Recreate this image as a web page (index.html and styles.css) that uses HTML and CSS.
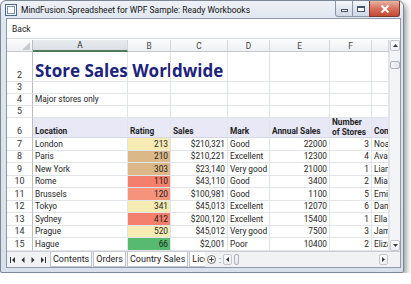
FILE: index.html
```html
<!DOCTYPE html>
<html lang="en">
<head>
    <meta charset="UTF-8">
    <title>MindFusion.Spreadsheet for WPF Sample: Ready Workbooks</title>
    <link rel="stylesheet" href="styles.css">
</head>
<body>
    <div class="window">
        <div class="titlebar">
            <svg class="app-icon" width="12" height="12" viewBox="0 0 12 12">
                <rect x="0.5" y="0.5" width="11" height="11" fill="#f4f7fb" stroke="#4d6a8c"/>
                <rect x="2.5" y="2.5" width="7" height="7" fill="#ffffff" stroke="#7d94ae"/>
            </svg>
            <span class="title">MindFusion.Spreadsheet for WPF Sample: Ready Workbooks</span>
            <div class="caption-buttons">
                <span class="cap-btn cap-min"><i></i></span>
                <span class="cap-btn cap-max"><i></i></span>
                <span class="cap-btn cap-close">
                    <svg width="10" height="8" viewBox="0 0 10 8">
                        <path d="M1.5 0.5 L8.5 7.5 M8.5 0.5 L1.5 7.5" stroke="#ffffff" stroke-width="2"/>
                    </svg>
                </span>
            </div>
        </div>

        <div class="client">
            <div class="toolbar"><span>Back</span></div>

            <div class="sheet">
                <div class="grid">
                    <!-- column headers -->
                    <div class="corner"><span class="corner-tri"></span></div>
                    <div class="ch sel">A</div>
                    <div class="ch">B</div>
                    <div class="ch">C</div>
                    <div class="ch">D</div>
                    <div class="ch">E</div>
                    <div class="ch">F</div>
                    <div class="ch"></div>

                    <!-- row 2 -->
                    <div class="rh">2</div>
                    <div class="c title-cell">Store Sales Worldwide</div>
                    <div class="c"></div><div class="c"></div><div class="c"></div><div class="c"></div><div class="c"></div><div class="c"></div>

                    <!-- row 3 -->
                    <div class="rh">3</div>
                    <div class="c"></div><div class="c"></div><div class="c"></div><div class="c"></div><div class="c"></div><div class="c"></div><div class="c"></div>

                    <!-- row 4 -->
                    <div class="rh">4</div>
                    <div class="c over">Major stores only</div>
                    <div class="c"></div><div class="c"></div><div class="c"></div><div class="c"></div><div class="c"></div><div class="c"></div>

                    <!-- row 5 -->
                    <div class="rh">5</div>
                    <div class="c"></div><div class="c"></div><div class="c"></div><div class="c"></div><div class="c"></div><div class="c"></div><div class="c"></div>

                    <!-- row 6: table header -->
                    <div class="rh">6</div>
                    <div class="c hd">Location</div>
                    <div class="c hd">Rating</div>
                    <div class="c hd">Sales</div>
                    <div class="c hd">Mark</div>
                    <div class="c hd">Annual Sales</div>
                    <div class="c hd wrap">Number of Stores</div>
                    <div class="c hd">Contact</div>

                    <div class="rh">7</div>
                    <div class="c">London</div>
                    <div class="c r heat-yellow">213</div>
                    <div class="c r">$210,321</div>
                    <div class="c">Good</div>
                    <div class="c r">22000</div>
                    <div class="c r">3</div>
                    <div class="c">Noah</div>

                    <div class="rh">8</div>
                    <div class="c">Paris</div>
                    <div class="c r heat-tan">210</div>
                    <div class="c r">$210,221</div>
                    <div class="c">Excellent</div>
                    <div class="c r">12300</div>
                    <div class="c r">4</div>
                    <div class="c">Ava</div>

                    <div class="rh">9</div>
                    <div class="c">New York</div>
                    <div class="c r heat-tan">303</div>
                    <div class="c r">$23,140</div>
                    <div class="c">Very good</div>
                    <div class="c r">21000</div>
                    <div class="c r">1</div>
                    <div class="c">Liam</div>

                    <div class="rh">10</div>
                    <div class="c">Rome</div>
                    <div class="c r heat-red">110</div>
                    <div class="c r">$43,110</div>
                    <div class="c">Good</div>
                    <div class="c r">3400</div>
                    <div class="c r">2</div>
                    <div class="c">Mia</div>

                    <div class="rh">11</div>
                    <div class="c">Brussels</div>
                    <div class="c r heat-salmon">120</div>
                    <div class="c r">$100,981</div>
                    <div class="c">Good</div>
                    <div class="c r">1100</div>
                    <div class="c r">5</div>
                    <div class="c">Emily</div>

                    <div class="rh">12</div>
                    <div class="c">Tokyo</div>
                    <div class="c r heat-yellow">341</div>
                    <div class="c r">$45,013</div>
                    <div class="c">Excellent</div>
                    <div class="c r">12070</div>
                    <div class="c r">6</div>
                    <div class="c">Daniel</div>

                    <div class="rh">13</div>
                    <div class="c">Sydney</div>
                    <div class="c r heat-red">412</div>
                    <div class="c r">$200,120</div>
                    <div class="c">Excellent</div>
                    <div class="c r">15400</div>
                    <div class="c r">1</div>
                    <div class="c">Ella</div>

                    <div class="rh">14</div>
                    <div class="c">Prague</div>
                    <div class="c r heat-yellow">520</div>
                    <div class="c r">$45,012</div>
                    <div class="c">Very good</div>
                    <div class="c r">7500</div>
                    <div class="c r">3</div>
                    <div class="c">James</div>

                    <div class="rh">15</div>
                    <div class="c">Hague</div>
                    <div class="c r heat-green">66</div>
                    <div class="c r">$2,001</div>
                    <div class="c">Poor</div>
                    <div class="c r">10400</div>
                    <div class="c r">2</div>
                    <div class="c">Elizabeth</div>
                </div>

                <div class="vscroll">
                    <span class="sb-btn">
                        <svg width="5" height="3" viewBox="0 0 5 3"><polygon points="0,3 5,3 2.5,0" fill="#3c3c3c"/></svg>
                    </span>
                    <span class="vthumb"></span>
                    <span class="sb-fill"></span>
                    <span class="sb-btn">
                        <svg width="5" height="3" viewBox="0 0 5 3"><polygon points="0,0 5,0 2.5,3" fill="#3c3c3c"/></svg>
                    </span>
                </div>
            </div>

            <div class="tabbar">
                <div class="tab-nav">
                    <svg width="6" height="6" viewBox="0 0 6 6"><rect x="0" y="0" width="1" height="6" fill="#333"/><polygon points="5,0 5,6 2,3" fill="#333"/></svg>
                    <svg width="4" height="6" viewBox="0 0 4 6"><polygon points="3.5,0 3.5,6 0.5,3" fill="#333"/></svg>
                    <svg width="4" height="6" viewBox="0 0 4 6"><polygon points="0.5,0 0.5,6 3.5,3" fill="#333"/></svg>
                    <svg width="6" height="6" viewBox="0 0 6 6"><polygon points="1,0 1,6 4,3" fill="#333"/><rect x="5" y="0" width="1" height="6" fill="#333"/></svg>
                </div>
                <div class="tabs">
                    <span class="tab">Contents</span>
                    <span class="tab">Orders</span>
                    <span class="tab">Country Sales</span>
                    <span class="tab">License</span>
                </div>
                <svg class="add-tab" width="9" height="9" viewBox="0 0 9 9">
                    <circle cx="4.5" cy="4.5" r="4" fill="#fbfbfb" stroke="#6b6b6b"/>
                    <path d="M4.5 2 V7 M2 4.5 H7" stroke="#444" stroke-width="1"/>
                </svg>
                <span class="split">:</span>
                <div class="hscroll">
                    <span class="sb-btn">
                        <svg width="3" height="5" viewBox="0 0 3 5"><polygon points="3,0 3,5 0,2.5" fill="#3c3c3c"/></svg>
                    </span>
                    <span class="hthumb"></span>
                    <span class="sb-fill"></span>
                    <span class="sb-btn">
                        <svg width="3" height="5" viewBox="0 0 3 5"><polygon points="0,0 0,5 3,2.5" fill="#3c3c3c"/></svg>
                    </span>
                </div>
                <div class="scroll-corner"></div>
            </div>
        </div>
    </div>
</body>
</html>
```

FILE: styles.css
```css
* {
    margin: 0;
    padding: 0;
    box-sizing: border-box;
}

body {
    background: #ffffff;
    font-family: Roboto, "Liberation Sans", sans-serif;
    color: #1e1e1e;
}

/* Window frame */
.window {
    width: 404px;
    height: 273px;
    border: 1px solid #7b8794;
    border-radius: 6px 6px 2px 2px;
    background: linear-gradient(#eef2f7, #dfe6ef 18px, #d8e1eb);
    padding: 0 2px 4px 5px;
    box-shadow: 2px 3px 6px rgba(0, 0, 0, 0.45);
    display: flex;
    flex-direction: column;
}

.titlebar {
    height: 17px;
    display: flex;
    align-items: center;
}

.app-icon {
    margin: 0 4px 0 -1px;
}

.title {
    font-size: 8.5px;
    color: #111;
    white-space: nowrap;
}

.caption-buttons {
    margin-left: auto;
    align-self: flex-start;
    display: flex;
    margin-right: 1px;
}

.cap-btn {
    height: 16px;
    border: 1px solid #8a97a8;
    border-top: none;
    display: flex;
    align-items: center;
    justify-content: center;
}

.cap-min,
.cap-max {
    width: 18px;
    background: linear-gradient(#f5f8fb, #dde5ee 55%, #cfd9e4);
    margin-right: -1px;
}

.cap-min {
    border-radius: 0 0 0 3px;
}

.cap-min i {
    width: 7px;
    height: 3px;
    border: 1px solid #44546a;
    margin-top: 4px;
    background: #fff;
}

.cap-max i {
    width: 8px;
    height: 6px;
    border: 1px solid #44546a;
    border-top-width: 2px;
    background: #fff;
}

.cap-close {
    width: 31px;
    border-color: #7a3a30;
    border-radius: 0 0 3px 0;
    background: linear-gradient(#eab3a6, #d8715c 50%, #c44a33);
}

/* Client area */
.client {
    flex: 1;
    border: 1px solid #8d9aa9;
    background: #ffffff;
    display: flex;
    flex-direction: column;
}

.toolbar {
    height: 20px;
    border-bottom: 1px solid #d3d9df;
    margin-bottom: 1px;
    display: flex;
    align-items: center;
    padding-left: 5px;
    font-size: 8.5px;
}

.sheet {
    height: 211px;
    display: flex;
}

.grid {
    display: grid;
    grid-template-columns: 26px 95px 43px 57px 42px 60px 42px 17px;
    grid-template-rows: 12px 30px 12px 12px 12px 20px 13px 12px 13px 12px 13px 12px 13px 12px 13px;
    font-size: 8.3px;
    line-height: 10px;
}

.corner,
.ch {
    background: linear-gradient(#fbfbfc, #eef0f2);
    border-right: 1px solid #d3d7dc;
    border-bottom: 1px solid #c4c9cf;
    display: flex;
    align-items: center;
    justify-content: center;
    color: #444;
}

.corner {
    position: relative;
    border-right-color: #b8bec5;
}

.corner-tri {
    position: absolute;
    right: 2px;
    bottom: 1px;
    width: 0;
    height: 0;
    border-left: 8px solid transparent;
    border-bottom: 8px solid #c7ccd2;
}

.ch.sel {
    background: linear-gradient(#e9ecef, #dadee3);
    border-bottom: 2px solid #4d7a57;
    color: #2a2a2a;
}

.rh {
    border-right: 1px solid #b8bec5;
    border-bottom: 1px solid #e1e4e8;
    display: flex;
    align-items: flex-end;
    justify-content: center;
    padding-bottom: 1px;
    color: #333;
    font-size: 9px;
}

.c {
    border-right: 1px solid #e1e4e8;
    border-bottom: 1px solid #e1e4e8;
    display: flex;
    align-items: flex-end;
    padding: 0 2px 1px;
    white-space: nowrap;
    overflow: hidden;
}

.c.r {
    justify-content: flex-end;
}

.c.over,
.c.title-cell {
    overflow: visible;
}

.title-cell {
    font-family: "Open Sans", sans-serif;
    font-size: 17px;
    line-height: 18px;
    font-weight: 700;
    color: #1b237c;
    padding-bottom: 1px;
}

.c.hd {
    background: #e8e8f7;
    font-weight: 700;
    border-bottom-color: #d6d8e6;
}

.c.wrap {
    white-space: normal;
    line-height: 9.5px;
    padding-bottom: 0;
}

.heat-yellow { background: #f5ebb3; }
.heat-tan { background: #dcb888; }
.heat-red { background: #f37f6c; }
.heat-salmon { background: #f5937b; }
.heat-green { background: #58ba6f; }

/* Scrollbars */
.vscroll {
    width: 11px;
    display: flex;
    flex-direction: column;
    background: #f3f4f5;
    border-left: 1px solid #e1e4e8;
}

.sb-btn {
    width: 10px;
    height: 11px;
    border: 1px solid #c2c7cd;
    border-radius: 2px;
    background: linear-gradient(#fdfdfd, #eceef0);
    display: flex;
    align-items: center;
    justify-content: center;
}

.vthumb {
    width: 10px;
    height: 8px;
    margin-top: 10px;
    border: 1px solid #aeb4bb;
    border-radius: 2px;
    background: linear-gradient(90deg, #f6f7f8, #e2e5e8);
}

.sb-fill {
    flex: 1;
}

.tabbar {
    flex: 1;
    display: flex;
    align-items: stretch;
    border-top: 1px solid #c9cdd2;
    background: #f1f2f3;
    font-size: 9px;
}

.tab-nav {
    width: 43px;
    display: flex;
    align-items: center;
    justify-content: space-between;
    padding: 0 4px 0 3px;
}

.tabs {
    display: flex;
    width: 155px;
    overflow: hidden;
}

.tab {
    background: #ffffff;
    border: 1px solid #bfc4ca;
    border-top: none;
    padding: 0 2px;
    margin-right: 1px;
    display: flex;
    align-items: center;
    white-space: nowrap;
    color: #222;
}

.add-tab {
    align-self: center;
    margin-left: 2px;
}

.split {
    align-self: center;
    margin: 0 2px 0 3px;
    color: #555;
    line-height: 10px;
}

.hscroll {
    flex: 1;
    display: flex;
    align-items: center;
    gap: 2px;
    padding-right: 1px;
}

.hscroll .sb-btn {
    width: 9px;
    height: 11px;
}

.hthumb {
    width: 5px;
    height: 11px;
    border: 1px solid #aeb4bb;
    border-radius: 2px;
    background: linear-gradient(#f6f7f8, #e2e5e8);
}

.scroll-corner {
    width: 11px;
    background: #f1f2f3;
}
```
